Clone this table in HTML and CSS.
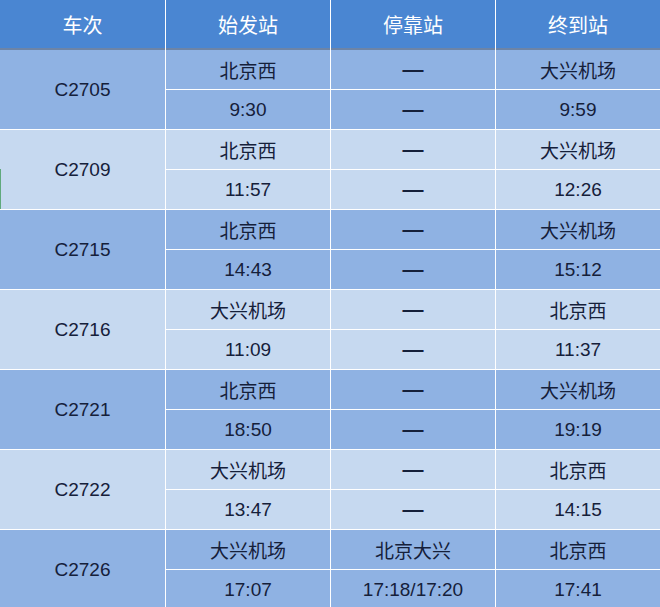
FILE: index.html
```html
<!DOCTYPE html>
<html lang="zh">
<head>
<meta charset="utf-8">
<title>列车时刻表</title>
<link rel="stylesheet" href="styles.css">
</head>
<body>
<div class="sheet">
  <div class="head">
    <div class="hc">车次</div>
    <div class="hc">始发站</div>
    <div class="hc">停靠站</div>
    <div class="hc">终到站</div>
  </div>
  <div class="body">
    <div class="c train dark">C2705</div>
    <div class="c dark">北京西</div><div class="c dark dash">—</div><div class="c dark">大兴机场</div>
    <div class="c dark">9:30</div><div class="c dark dash">—</div><div class="c dark">9:59</div>

    <div class="c train light edge">C2709</div>
    <div class="c light">北京西</div><div class="c light dash">—</div><div class="c light">大兴机场</div>
    <div class="c light">11:57</div><div class="c light dash">—</div><div class="c light">12:26</div>

    <div class="c train dark">C2715</div>
    <div class="c dark">北京西</div><div class="c dark dash">—</div><div class="c dark">大兴机场</div>
    <div class="c dark">14:43</div><div class="c dark dash">—</div><div class="c dark">15:12</div>

    <div class="c train light">C2716</div>
    <div class="c light">大兴机场</div><div class="c light dash">—</div><div class="c light">北京西</div>
    <div class="c light">11:09</div><div class="c light dash">—</div><div class="c light">11:37</div>

    <div class="c train dark">C2721</div>
    <div class="c dark">北京西</div><div class="c dark dash">—</div><div class="c dark">大兴机场</div>
    <div class="c dark">18:50</div><div class="c dark dash">—</div><div class="c dark">19:19</div>

    <div class="c train light">C2722</div>
    <div class="c light">大兴机场</div><div class="c light dash">—</div><div class="c light">北京西</div>
    <div class="c light">13:47</div><div class="c light dash">—</div><div class="c light">14:15</div>

    <div class="c train dark">C2726</div>
    <div class="c dark">大兴机场</div><div class="c dark">北京大兴</div><div class="c dark">北京西</div>
    <div class="c dark">17:07</div><div class="c dark">17:18/17:20</div><div class="c dark">17:41</div>
  </div>
</div>
</body>
</html>
```
FILE: styles.css
```css
html, body {
  margin: 0;
  padding: 0;
  background: #ffffff;
}
body {
  width: 660px;
  height: 607px;
  overflow: hidden;
  font-family: "Liberation Sans", "Noto Sans CJK SC", sans-serif;
}
.sheet {
  display: flex;
  flex-direction: column;
  width: 660px;
}
.head {
  display: grid;
  grid-template-columns: 165px 164px 164px 164px;
  column-gap: 1px;
  background: #ffffff;
}
.hc {
  height: 48px;
  border-bottom: 2px solid #6d84a6;
  background: #4a86d2;
  color: #ffffff;
  font-size: 20px;
  display: flex;
  align-items: center;
  justify-content: center;
}
.body {
  display: grid;
  grid-template-columns: 165px 164px 164px 164px;
  grid-auto-rows: 39px;
  gap: 1px;
  background: #ffffff;
  padding-bottom: 1px;
}
.c {
  display: flex;
  align-items: center;
  justify-content: center;
  color: #15203a;
  font-size: 19px;
}
.train {
  grid-row: span 2;
}
.dark {
  background: #8fb2e3;
}
.light {
  background: #c6d9f0;
}
.dash {
  font-family: "Liberation Sans", sans-serif;
  font-size: 21px;
  font-weight: bold;
  padding-bottom: 1px;
}
.edge {
  background: linear-gradient(#5fa97c, #5fa97c) left bottom / 1px 40px no-repeat, #c6d9f0;
}
```
